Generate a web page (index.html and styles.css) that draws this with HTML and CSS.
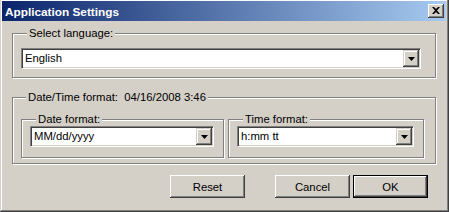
FILE: index.html
```html
<!DOCTYPE html>
<html>
<head>
<meta charset="utf-8">
<link rel="stylesheet" href="styles.css">
</head>
<body>
<div class="window">
  <div class="titlebar">
    <span class="title">Application Settings</span>
    <span class="close"><svg width="8" height="7" viewBox="0 0 8 7"><path d="M0 0h2l2 2 2-2h2L5 3.5 8 7H6L4 5 2 7H0l3-3.5z" fill="#000"/></svg></span>
  </div>
  <div class="content">
    <fieldset class="group lang">
      <legend>Select language:</legend>
      <div class="combo lang-combo"><span class="value">English</span><span class="drop"><svg width="7" height="4" viewBox="0 0 7 4"><path d="M0 0h7L3.5 4z" fill="#000"/></svg></span></div>
    </fieldset>
    <fieldset class="group dt">
      <legend>Date/Time format:&nbsp; 04/16/2008 3:46</legend>
      <div class="dt-row">
        <fieldset class="group inner date">
          <legend>Date format:</legend>
          <div class="combo date-combo"><span class="value">MM/dd/yyyy</span><span class="drop"><svg width="7" height="4" viewBox="0 0 7 4"><path d="M0 0h7L3.5 4z" fill="#000"/></svg></span></div>
        </fieldset>
        <fieldset class="group inner time">
          <legend>Time format:</legend>
          <div class="combo time-combo"><span class="value">h:mm tt</span><span class="drop"><svg width="7" height="4" viewBox="0 0 7 4"><path d="M0 0h7L3.5 4z" fill="#000"/></svg></span></div>
        </fieldset>
      </div>
    </fieldset>
    <div class="buttons">
      <button class="btn reset">Reset</button>
      <button class="btn">Cancel</button>
      <button class="btn default">OK</button>
    </div>
  </div>
</div>
</body>
</html>
```
FILE: styles.css
```css
html, body {
  margin: 0;
  padding: 0;
  background: #d4d0c8;
}
body {
  font-family: "Liberation Sans", Arial, sans-serif;
  font-size: 11.3px;
  color: #000;
}
.window {
  width: 449px;
  height: 212px;
  box-sizing: border-box;
  background: #d4d0c8;
  padding: 1px 3px 3px 2px;
  box-shadow: inset -1px -1px #404040, inset 1px 0 #d4d0c8, inset -2px -2px #808080, inset 2px 1px #fff;
  display: flex;
  flex-direction: column;
}
.titlebar {
  height: 20px;
  background: linear-gradient(to right, #0a246a, #a6caf0);
  display: flex;
  align-items: center;
  justify-content: space-between;
  padding: 0 2px 0 3px;
}
.title {
  color: #fff;
  font-weight: bold;
  font-size: 11.8px;
  line-height: 14px;
  margin-top: 1px;
}
.close {
  width: 16px;
  height: 14px;
  box-sizing: border-box;
  background: #d4d0c8;
  box-shadow: inset -1px -1px #404040, inset 1px 1px #fff, inset -2px -2px #808080;
  display: flex;
  align-items: center;
  justify-content: center;
  padding: 0 1px 1px 0;
}
.close svg { display: block; }
.content {
  flex: 1;
  padding: 5px 10px 0 10px;
  display: flex;
  flex-direction: column;
}
.group {
  margin: 0;
  border: 1px solid #808080;
  box-shadow: inset 1px 1px #fff, 1px 1px #fff;
  min-width: 0;
}
.group > legend {
  padding: 0 2px;
  margin-left: 6px;
  line-height: 14px;
  background: #d4d0c8;
}
.lang {
  padding: 8px 14px 8px 8px;
}
.dt {
  margin-top: 12px;
  padding: 9px 11px 5px 8px;
}
.dt > legend {
  margin-left: 5px;
}
.dt-row {
  display: flex;
  gap: 4px;
}
.inner {
  padding: 1px 9px 10px 8px;
  box-sizing: border-box;
}
.inner > legend {
  line-height: 12px;
}
.date { width: 203px; }
.time { width: 196px; }
.combo {
  height: 21px;
  box-sizing: border-box;
  background: #fff;
  border: 1px solid;
  border-color: #808080 #fff #fff #808080;
  box-shadow: inset 1px 1px #404040, inset -1px -1px #d4d0c8;
  display: flex;
  padding: 1px;
}
.combo .value {
  flex: 1;
  padding-left: 2px;
  line-height: 17px;
}
.combo .drop {
  width: 16px;
  height: 17px;
  box-sizing: border-box;
  background: #d4d0c8;
  box-shadow: inset -1px -1px #404040, inset 1px 1px #d4d0c8, inset -2px -2px #808080, inset 2px 2px #fff;
  display: flex;
  align-items: center;
  justify-content: center;
  padding-left: 1px;
}
.combo .drop svg { display: block; }
.buttons {
  margin-top: 11px;
  display: flex;
  justify-content: flex-end;
  gap: 3px;
  padding-right: 8px;
}
.btn {
  width: 75px;
  height: 23px;
  box-sizing: border-box;
  font-family: "Liberation Sans", Arial, sans-serif;
  font-size: 11.3px;
  color: #000;
  background: #d4d0c8;
  border: none;
  padding: 0;
  margin: 0;
  box-shadow: inset -1px -1px #404040, inset 1px 1px #fff, inset -2px -2px #808080, inset 2px 2px #d4d0c8;
}
.btn.reset {
  margin-right: 27px;
}
.btn.default {
  border: 1px solid #000;
}
```
